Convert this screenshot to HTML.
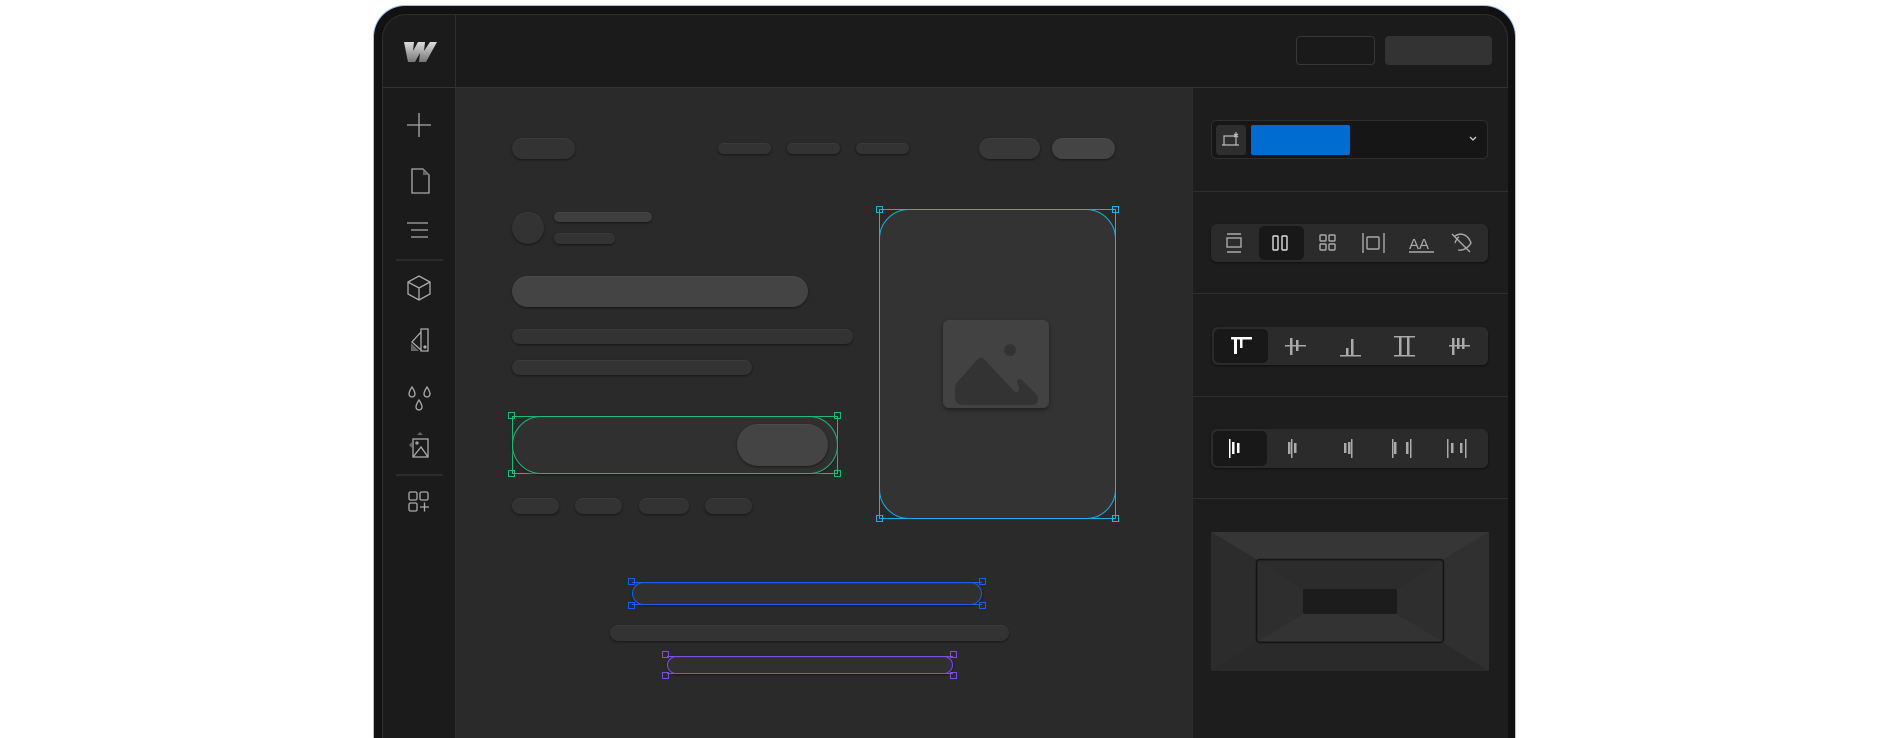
<!DOCTYPE html>
<html><head><meta charset="utf-8"><style>
*{margin:0;padding:0;box-sizing:border-box}
html,body{width:1888px;height:738px;overflow:hidden}
body{background:#fff;position:relative;font-family:"Liberation Sans",sans-serif}
#w{position:absolute;left:0;top:0;width:1888px;height:738px;overflow:hidden}
.a{position:absolute}
.p{position:absolute;border-radius:999px;background:#333;box-shadow:0 1px 2px rgba(0,0,0,.5),inset 0 1px 0 rgba(255,255,255,.04)}
.h{position:absolute;width:7px;height:7px;border:1px solid;background:transparent}
.seg{position:absolute;background:#2b2b2b;border-radius:6px;box-shadow:0 1px 2px rgba(0,0,0,.5)}
.act{position:absolute;background:#181818;border-radius:5px}
</style></head><body><div id="w">
<div class="a" style="left:373px;top:5px;width:1143px;height:733px;border-radius:32px 32px 0 0;background:#111;border:1px solid #9cc0ff;border-bottom:none"></div>
<div class="a" style="left:382px;top:14px;width:1126px;height:724px;border-radius:24px 24px 0 0;background:#1b1b1b;border:1px solid #2e2e2e;border-bottom:none"></div>
<div class="a" style="left:455px;top:87px;width:737px;height:651px;background:#2a2a2a"></div>
<div class="a" style="left:1192px;top:87px;width:316px;height:651px;background:#1d1d1d;border-left:1px solid #2c2c2c"></div>
<div class="a" style="left:383px;top:87px;width:1125px;height:1px;background:#333"></div>
<div class="a" style="left:455px;top:15px;width:1px;height:723px;background:#2f2f2f"></div>
<div class="a" style="left:1193px;top:191px;width:315px;height:1px;background:#2f2f2f"></div>
<div class="a" style="left:1193px;top:293px;width:315px;height:1px;background:#2f2f2f"></div>
<div class="a" style="left:1193px;top:396px;width:315px;height:1px;background:#2f2f2f"></div>
<div class="a" style="left:1193px;top:498px;width:315px;height:1px;background:#2f2f2f"></div>
<svg class="a" style="left:402px;top:40px" width="36" height="24" viewBox="0 0 36 24"><defs><linearGradient id="g" x1="0" y1="0" x2="0" y2="1"><stop offset="0" stop-color="#ddd"/><stop offset="1" stop-color="#777"/></linearGradient></defs><path d="M4 2h8l-1 9 5-9h7l-1 9 6-9h7l-11 20h-7l1-9-5 9h-7l-4-20z" fill="url(#g)"/></svg>
<div class="a" style="left:1296px;top:36px;width:79px;height:29px;border:1px solid #383838;border-radius:4px;background:#1a1a1a"></div>
<div class="a" style="left:1385px;top:36px;width:107px;height:29px;border-radius:4px;background:#333"></div>
<svg class="a" style="left:383px;top:88px" width="72" height="440" viewBox="0 0 72 440" fill="none" stroke="#aaa" stroke-width="1.3">
<path d="M36 25v24M24 37h24"/>
<path d="M29 81h11l6 6v18h-17z"/><path d="M40 81l6 6h-6z" fill="#666" stroke="none"/>
<path d="M24 135h21M28 142h17M28 149h17"/>
<line x1="13" y1="172" x2="60" y2="172" stroke="#333" stroke-width="1.5"/>
<path d="M36 188l11 6v12l-11 6-11-6v-12zM25 194l11 6 11-6M36 200v12"/>
<path d="M38 241h7v22h-7zM38 244l-9 10 9 8"/><path d="M28 255l8 8h-8z" fill="#666" stroke="none"/><circle cx="42" cy="259" r="1" fill="#aaa"/>
<path d="M29 299c2 3 3 5 3 7a3 3 0 0 1-6 0c0-2 1-4 3-7zM44 299c2 3 3 5 3 7a3 3 0 0 1-6 0c0-2 1-4 3-7zM36 312c2 3 3 5 3 7a3 3 0 0 1-6 0c0-2 1-4 3-7z"/>
<rect x="30" y="351" width="15" height="18"/><path d="M30 369l8-10 7 10"/><circle cx="34" cy="355" r="1"/><path d="M37 344l3 3h-6z M26 357l3-3v6z" fill="#666" stroke="none"/>
<line x1="13" y1="387" x2="60" y2="387" stroke="#333" stroke-width="1.5"/>
<rect x="26" y="404" width="8" height="8" rx="1.5"/><rect x="37" y="404" width="8" height="8" rx="1.5"/><rect x="26" y="415" width="8" height="8" rx="1.5"/><path d="M37 419h9M41.5 414.5v9"/>
</svg>
<div class="p" style="left:512px;top:138px;width:63px;height:21px"></div>
<div class="p" style="left:718px;top:143px;width:53px;height:11px"></div>
<div class="p" style="left:787px;top:143px;width:53px;height:11px"></div>
<div class="p" style="left:856px;top:143px;width:53px;height:11px"></div>
<div class="p" style="left:979px;top:138px;width:61px;height:21px;background:#383838"></div>
<div class="p" style="left:1052px;top:138px;width:63px;height:21px;background:#444"></div>
<div class="p" style="left:512px;top:212px;width:32px;height:32px"></div>
<div class="p" style="left:554px;top:212px;width:98px;height:10px;background:#3e3e3e"></div>
<div class="p" style="left:554px;top:233px;width:61px;height:11px"></div>
<div class="p" style="left:512px;top:276px;width:296px;height:31px;background:#444"></div>
<div class="p" style="left:512px;top:329px;width:341px;height:15px"></div>
<div class="p" style="left:512px;top:360px;width:240px;height:15px"></div>
<div class="a" style="left:512px;top:416px;width:326px;height:58px;border:1px solid #1fb97a"></div>
<div class="p" style="left:512px;top:416px;width:326px;height:58px;border:1px solid #1fb97a;background:#303030"></div>
<div class="p" style="left:737px;top:424px;width:91px;height:42px;background:#444"></div>
<div class="h" style="left:508px;top:412px;border-color:#1fb97a"></div>
<div class="h" style="left:834px;top:412px;border-color:#1fb97a"></div>
<div class="h" style="left:508px;top:470px;border-color:#1fb97a"></div>
<div class="h" style="left:834px;top:470px;border-color:#1fb97a"></div>
<div class="p" style="left:512px;top:498px;width:47px;height:16px"></div>
<div class="p" style="left:575px;top:498px;width:47px;height:16px"></div>
<div class="p" style="left:639px;top:498px;width:50px;height:16px"></div>
<div class="p" style="left:705px;top:498px;width:47px;height:16px"></div>
<div class="a" style="left:879px;top:209px;width:237px;height:310px;border:1px solid #1eaee0"></div>
<div class="a" style="left:879px;top:209px;width:237px;height:310px;border:1px solid #1eaee0;border-radius:30px;background:#333"></div>
<div class="h" style="left:876px;top:206px;border-color:#1eaee0"></div>
<div class="h" style="left:1112px;top:206px;border-color:#1eaee0"></div>
<div class="h" style="left:876px;top:515px;border-color:#1eaee0"></div>
<div class="h" style="left:1112px;top:515px;border-color:#1eaee0"></div>
<div class="a" style="left:943px;top:320px;width:106px;height:88px;border-radius:6px;background:#424242;box-shadow:0 2px 4px rgba(0,0,0,.4)"></div>
<svg class="a" style="left:943px;top:320px" width="106" height="88" viewBox="0 0 106 88"><circle cx="67" cy="30" r="6" fill="#333"/><path d="M12 70c0-5 2-8 5-11l18-20c2-2 4-2 6 0l30 32c3 2 5 1 5-2 0-3-2-5-2-7 0-3 3-4 5-2l14 14c4 4 2 11-4 11H20c-5 0-8-3-8-8z" fill="#333"/></svg>
<div class="p" style="left:632px;top:582px;width:350px;height:23px;border:1.5px solid #1b5ee8;background:#303030"></div>
<div class="a" style="left:632px;top:582px;width:350px;height:23px;border-top:1.5px solid #1b5ee8;border-bottom:1.5px solid #1b5ee8"></div>
<div class="h" style="left:628px;top:578px;border-color:#1b5ee8"></div>
<div class="h" style="left:979px;top:578px;border-color:#1b5ee8"></div>
<div class="h" style="left:628px;top:602px;border-color:#1b5ee8"></div>
<div class="h" style="left:979px;top:602px;border-color:#1b5ee8"></div>
<div class="p" style="left:610px;top:625px;width:399px;height:16px"></div>
<div class="p" style="left:667px;top:656px;width:286px;height:18px;border:1.5px solid #7b4fe0;background:#303030"></div>
<div class="a" style="left:667px;top:656px;width:286px;height:18px;border-top:1.5px solid #7b4fe0;border-bottom:1.5px solid #7b4fe0"></div>
<div class="h" style="left:662px;top:651px;border-color:#7b4fe0"></div>
<div class="h" style="left:950px;top:651px;border-color:#7b4fe0"></div>
<div class="h" style="left:662px;top:672px;border-color:#7b4fe0"></div>
<div class="h" style="left:950px;top:672px;border-color:#7b4fe0"></div>
<div class="a" style="left:1211px;top:120px;width:277px;height:39px;border:1px solid #2e2e2e;border-radius:5px;background:#161616"></div>
<div class="a" style="left:1216px;top:125px;width:30px;height:30px;border-radius:3px;background:#2e2e2e"></div>
<svg class="a" style="left:1216px;top:125px" width="30" height="30" fill="none" stroke="#bbb" stroke-width="1.2"><path d="M8 20V11h11M6 20h17M20 10v10M18 9l4 3M22 9l-4 3M20 7v6"/></svg>
<div class="a" style="left:1251px;top:125px;width:99px;height:30px;border-radius:2px;background:#006bd1"></div>
<svg class="a" style="left:1468px;top:135px" width="10" height="8" fill="none" stroke="#ccc" stroke-width="1.3"><path d="M2 2l3 3 3-3"/></svg>
<div class="seg" style="left:1211px;top:224px;width:277px;height:38px"></div>
<div class="act" style="left:1259px;top:226px;width:45px;height:34px"></div>
<svg class="a" style="left:1211px;top:224px" width="277" height="38" fill="none" stroke="#aaa" stroke-width="1.4">
<path d="M16 10h14M16 28h14"/><rect x="16" y="14" width="14" height="9"/>
<rect x="62" y="12" width="5" height="14" rx="1" stroke="#ddd"/><rect x="71" y="12" width="5" height="14" rx="1" stroke="#ddd"/>
<rect x="109" y="11" width="6" height="6" rx="1"/><rect x="118" y="11" width="6" height="6" rx="1"/><rect x="109" y="20" width="6" height="6" rx="1"/><rect x="118" y="20" width="6" height="6" rx="1"/>
<path d="M152 9v20M173 9v20"/><rect x="156" y="13" width="12" height="12" rx="1"/>
<path d="M198 28h25"/><text x="198" y="25" fill="#aaa" stroke="none" font-size="15" font-family="Liberation Sans">AA</text>
<path d="M244 12c8-5 14 1 16 7-3 5-8 8-13 7M244 19c1-3 2-5 4-6M241 10l18 18"/>
</svg>
<div class="seg" style="left:1212px;top:327px;width:276px;height:38px"></div>
<div class="act" style="left:1214px;top:329px;width:54px;height:34px"></div>
<svg class="a" style="left:1212px;top:327px" width="276" height="38" fill="#aaa">
<rect x="19" y="10" width="21" height="2.5" fill="#fff"/><rect x="22" y="10" width="3" height="17" fill="#fff"/><rect x="28" y="10" width="2.5" height="11" fill="#fff"/>
<rect x="73" y="18" width="21" height="1.5"/><rect x="78" y="11" width="2.5" height="17"/><rect x="84" y="13" width="2.5" height="11"/>
<rect x="128" y="28" width="21" height="1.5"/><rect x="134" y="21" width="2.5" height="7"/><rect x="139" y="12" width="2.5" height="16"/>
<rect x="182" y="9" width="21" height="1.5"/><rect x="182" y="28" width="21" height="1.5"/><rect x="187" y="9" width="2.5" height="20"/><rect x="195" y="9" width="2.5" height="20"/>
<rect x="237" y="18" width="21" height="1.5"/><rect x="240" y="11" width="2.5" height="17"/><rect x="245" y="11" width="2.5" height="11"/><rect x="250" y="11" width="2.5" height="11"/>
</svg>
<div class="seg" style="left:1211px;top:429px;width:277px;height:39px"></div>
<div class="act" style="left:1213px;top:431px;width:54px;height:35px"></div>
<svg class="a" style="left:1211px;top:429px" width="277" height="39" fill="#aaa">
<rect x="18" y="10" width="1.5" height="19" fill="#fff"/><rect x="21" y="13" width="2.5" height="12" fill="#fff"/><rect x="26" y="14" width="2.5" height="10" fill="#fff"/>
<rect x="80" y="10" width="1.5" height="19"/><rect x="77" y="13" width="2.5" height="12"/><rect x="83" y="14" width="2.5" height="10"/>
<rect x="140" y="10" width="1.5" height="19"/><rect x="137" y="13" width="2.5" height="12"/><rect x="133" y="14" width="2.5" height="10"/>
<rect x="181" y="10" width="1.5" height="19"/><rect x="183" y="13" width="2.5" height="12"/><rect x="199" y="10" width="1.5" height="19"/><rect x="195" y="13" width="2.5" height="12"/>
<rect x="236" y="10" width="1.5" height="19"/><rect x="240" y="14" width="2.5" height="10"/><rect x="249" y="14" width="2.5" height="10"/><rect x="254" y="10" width="1.5" height="19"/>
</svg>
<svg class="a" style="left:1211px;top:532px" width="278" height="139" viewBox="0 0 278 139">
<rect x="0" y="0" width="278" height="139" rx="4" fill="#2e2e2e"/>
<path d="M0 0L45 27H233L278 0z" fill="#363636"/><path d="M0 139L45 111H233L278 139z" fill="#2a2a2a"/>
<path d="M0 0L45 27V111L0 139z" fill="#2c2c2c"/><path d="M278 0L233 27V111L278 139z" fill="#303030"/>
<rect x="45.5" y="27.5" width="187" height="83" rx="3" fill="#2a2a2a" stroke="#151515" stroke-width="1.5"/>
<path d="M47 29L92 57H186L231 29z" fill="#2c2c2c"/><path d="M47 109L92 82H186L231 109z" fill="#333"/>
<path d="M47 29L92 57V82L47 109z" fill="#2e2e2e"/><path d="M231 29L186 57V82L231 109z" fill="#2e2e2e"/>
<rect x="92" y="57" width="94" height="25" rx="2" fill="#1c1c1c"/>
</svg>
</div></body></html>
